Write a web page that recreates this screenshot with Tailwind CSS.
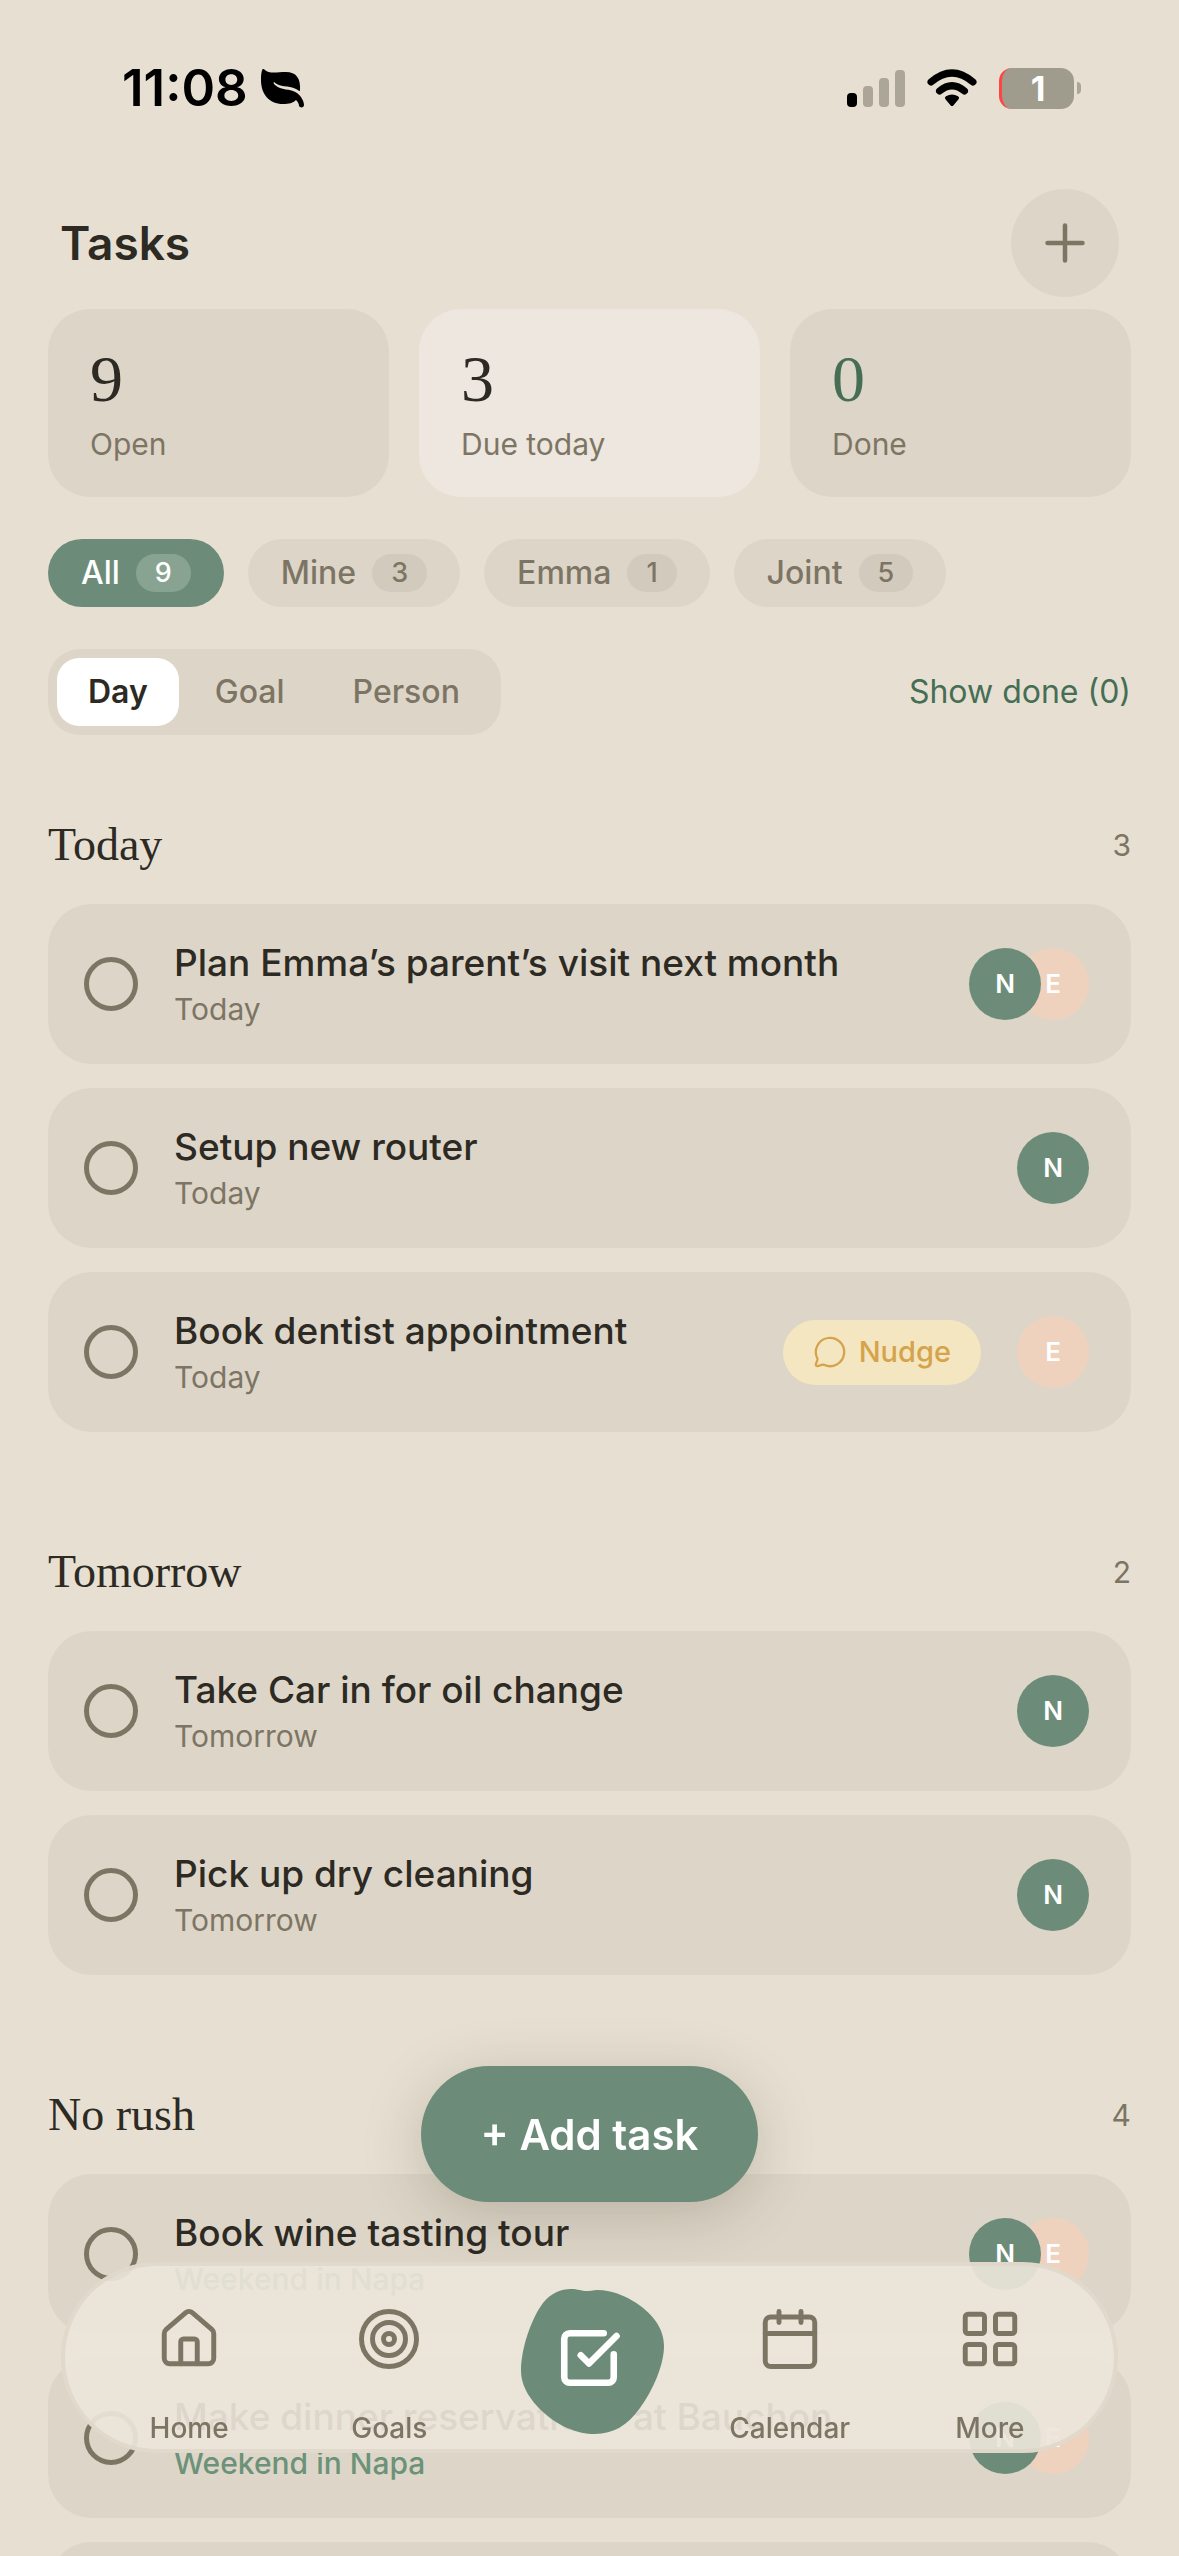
<!DOCTYPE html>
<html lang="en">
<head>
    <meta charset="utf-8">
    <meta name="viewport" content="width=device-width, initial-scale=1">
    <title>Tasks</title>
    <script src="https://cdn.jsdelivr.net/npm/@tailwindcss/browser@4"></script>
</head>

<body class="h-screen overflow-hidden bg-[#e7e0d2] font-['Inter','Noto_Sans',sans-serif] text-[#2d2a24]">

    <!-- status bar -->
    <div class="flex items-center justify-between pt-[56px] pl-[122px] pr-[98px] h-[120px] text-black">
        <div class="flex items-center gap-3">
            <span class="text-[51px] leading-[60px] font-semibold">11:08</span>
            <svg class="w-[46px] h-[40px]" viewBox="0 0 46 40" fill="none">
                <path fill="#000" d="M3 1C2 1 1 5 1 12c0 14 8 24 22 24 6 0 10-1 13-4 2 2 3 4 3 6 1 2 5 2 5-1 0-4-3-9-7-12-7-5-16-2-22-8-1-1-2-2-1-3 6 6 14 3 22 7 2 1 3 2 4 2C41 10 36 4 26 4 17 4 9 6 5 2 4 1 4 1 3 1z"/>
            </svg>
        </div>
        <div class="flex items-center gap-[22px]">
            <svg class="w-[58px] h-[40px]" viewBox="0 0 58 40" fill="#aca698">
                <rect x="0" y="25" width="10" height="14" rx="4" fill="#000"/>
                <rect x="16" y="18" width="10" height="21" rx="4"/>
                <rect x="32" y="10" width="10" height="29" rx="4"/>
                <rect x="48" y="2" width="10" height="37" rx="4"/>
            </svg>
            <svg class="w-[50px] h-[40px]" viewBox="0 0 50 40" fill="none" stroke="#000" stroke-width="7" stroke-linecap="round">
                <path d="M4 14Q25-4 46 14M12.500 23Q25 12.500 37.500 23"/>
                <path d="M20 30Q25 27 30 30L25 36z" fill="#000" stroke-width="4" stroke-linejoin="round"/>
            </svg>
            <div class="flex items-center gap-[3px]">
                <div class="w-[75px] h-[41px] rounded-[13px] overflow-hidden bg-[#9f9c8e] border-l-[3px] border-[#ff4544] text-white text-[34px] leading-[41px] font-bold text-center">1</div>
                <div class="w-1 h-3 rounded-r-full bg-[#aca698]"></div>
            </div>
        </div>
    </div>

    <main class="px-12">
        <header class="flex items-center justify-between px-3 mt-[69px]">
            <h1 class="text-[46px] leading-[60px] font-semibold">Tasks</h1>
            <button type="button" aria-label="New task" class="flex items-center justify-center size-[108px] rounded-full bg-[#ddd6c8]">
                <svg class="size-[60px]" viewBox="0 0 24 24" fill="none" stroke="#7d7564" stroke-width="1.8" stroke-linecap="round">
                    <path d="M5 12h14M12 5v14"/>
                </svg>
            </button>
        </header>

        <!-- counters -->
        <div class="grid grid-cols-3 gap-[30px] mt-3">
            <div class="h-[188px] rounded-[42px] bg-[#ddd6c8] px-[42px] pt-[34px]">
                <div class="font-['Liberation_Serif',serif] text-[66px] leading-[72px]">9</div>
                <div class="mt-2 text-[30px] leading-[42px] text-[#7d7564]">Open</div>
            </div>
            <div class="h-[188px] rounded-[42px] bg-[#ede7df] px-[42px] pt-[34px]">
                <div class="font-['Liberation_Serif',serif] text-[66px] leading-[72px]">3</div>
                <div class="mt-2 text-[30px] leading-[42px] text-[#7d7564]">Due today</div>
            </div>
            <div class="h-[188px] rounded-[42px] bg-[#ddd6c8] px-[42px] pt-[34px]">
                <div class="font-['Liberation_Serif',serif] text-[66px] leading-[72px] text-[#466e55]">0</div>
                <div class="mt-2 text-[30px] leading-[42px] text-[#7d7564]">Done</div>
            </div>
        </div>

        <!-- owner filter -->
        <div class="flex gap-6 mt-[42px] text-[32px] font-medium text-[#7d7564]">
            <button type="button" class="flex items-center gap-4 h-[68px] px-[33px] rounded-full bg-[#6c8c79] text-white">
                All <span class="px-[19px] rounded-full bg-white/20 text-[27px] leading-[38px]">9</span>
            </button>
            <button type="button" class="flex items-center gap-4 h-[68px] px-[33px] rounded-full bg-[#ddd6c8]">
                Mine <span class="px-[19px] rounded-full bg-[#d2cabc] text-[27px] leading-[38px]">3</span>
            </button>
            <button type="button" class="flex items-center gap-4 h-[68px] px-[33px] rounded-full bg-[#ddd6c8]">
                Emma <span class="px-[19px] rounded-full bg-[#d2cabc] text-[27px] leading-[38px]">1</span>
            </button>
            <button type="button" class="flex items-center gap-4 h-[68px] px-[33px] rounded-full bg-[#ddd6c8]">
                Joint <span class="px-[19px] rounded-full bg-[#d2cabc] text-[27px] leading-[38px]">5</span>
            </button>
        </div>

        <!-- grouping -->
        <div class="flex items-center justify-between mt-[42px]">
            <div class="flex gap-1 p-[9px] rounded-[32px] bg-[#ddd6c8] text-[32px] leading-[68px] font-medium text-[#7d7564]">
                <button type="button" class="px-[31px] rounded-[22px] bg-white font-semibold text-[#2d2a24]">Day</button>
                <button type="button" class="px-[32px]">Goal</button>
                <button type="button" class="px-[32px]">Person</button>
            </div>
            <button type="button" class="text-[32px] leading-[42px] text-[#466e55]">Show done (0)</button>
        </div>

        <section class="mt-[80px]">
            <div class="flex items-center justify-between h-[60px]">
                <h2 class="font-['Liberation_Serif',serif] text-[46px] leading-[60px]">Today</h2>
                <span class="text-[30px] text-[#7d7564]">3</span>
            </div>
            <ul class="flex flex-col gap-6 mt-[29px]">
                <li class="flex items-center gap-9 h-[160px] pl-9 pr-[42px] rounded-[44px] bg-[#ddd6c8]">
                    <input id="t1" type="checkbox" class="appearance-none shrink-0 size-[54px] rounded-full border-[5px] border-[#7d7564]">
                    <div class="flex-1 pt-0.5">
                        <label for="t1" class="block text-[37px] leading-[48px] font-medium">Plan Emma’s parent’s visit next month</label>
                        <p class="text-[30px] leading-[44px] text-[#7d7564]">Today</p>
                    </div>
                    <div class="flex text-[26px] leading-[72px] font-semibold text-white text-center">
                        <span class="relative z-10 size-[72px] rounded-full bg-[#6c8c79]">N</span>
                        <span class="size-[72px] -ml-6 rounded-full bg-[#eed2be]">E</span>
                    </div>
                </li>
                <li class="flex items-center gap-9 h-[160px] pl-9 pr-[42px] rounded-[44px] bg-[#ddd6c8]">
                    <input id="t2" type="checkbox" class="appearance-none shrink-0 size-[54px] rounded-full border-[5px] border-[#7d7564]">
                    <div class="flex-1 pt-0.5">
                        <label for="t2" class="block text-[37px] leading-[48px] font-medium">Setup new router</label>
                        <p class="text-[30px] leading-[44px] text-[#7d7564]">Today</p>
                    </div>
                    <span class="size-[72px] rounded-full bg-[#6c8c79] text-[26px] leading-[72px] font-semibold text-white text-center">N</span>
                </li>
                <li class="flex items-center gap-9 h-[160px] pl-9 pr-[42px] rounded-[44px] bg-[#ddd6c8]">
                    <input id="t3" type="checkbox" class="appearance-none shrink-0 size-[54px] rounded-full border-[5px] border-[#7d7564]">
                    <div class="flex-1 pt-0.5">
                        <label for="t3" class="block text-[37px] leading-[48px] font-medium">Book dentist appointment</label>
                        <p class="text-[30px] leading-[44px] text-[#7d7564]">Today</p>
                    </div>
                    <button type="button" class="flex items-center gap-3 h-[65px] px-[30px] rounded-full bg-[#f4e6c0] text-[29px] font-medium text-[#d4a34c]">
                        <svg class="size-[34px]" viewBox="0 0 24 24" fill="none" stroke="currentColor" stroke-width="1.6" stroke-linecap="round" stroke-linejoin="round">
                            <path d="M2.992 16.342a2 2 0 0 1 .094 1.167l-1.065 3.290a1 1 0 0 0 1.236 1.168l3.413-.998a2 2 0 0 1 1.099.092 10 10 0 1 0-4.777-4.719"/>
                        </svg>
                        Nudge
                    </button>
                    <span class="size-[72px] rounded-full bg-[#eed2be] text-[26px] leading-[72px] font-semibold text-white text-center">E</span>
                </li>
            </ul>
        </section>

        <section class="mt-[110px]">
            <div class="flex items-center justify-between h-[60px]">
                <h2 class="font-['Liberation_Serif',serif] text-[46px] leading-[60px]">Tomorrow</h2>
                <span class="text-[30px] text-[#7d7564]">2</span>
            </div>
            <ul class="flex flex-col gap-6 mt-[29px]">
                <li class="flex items-center gap-9 h-[160px] pl-9 pr-[42px] rounded-[44px] bg-[#ddd6c8]">
                    <input id="t4" type="checkbox" class="appearance-none shrink-0 size-[54px] rounded-full border-[5px] border-[#7d7564]">
                    <div class="flex-1 pt-0.5">
                        <label for="t4" class="block text-[37px] leading-[48px] font-medium">Take Car in for oil change</label>
                        <p class="text-[30px] leading-[44px] text-[#7d7564]">Tomorrow</p>
                    </div>
                    <span class="size-[72px] rounded-full bg-[#6c8c79] text-[26px] leading-[72px] font-semibold text-white text-center">N</span>
                </li>
                <li class="flex items-center gap-9 h-[160px] pl-9 pr-[42px] rounded-[44px] bg-[#ddd6c8]">
                    <input id="t5" type="checkbox" class="appearance-none shrink-0 size-[54px] rounded-full border-[5px] border-[#7d7564]">
                    <div class="flex-1 pt-0.5">
                        <label for="t5" class="block text-[37px] leading-[48px] font-medium">Pick up dry cleaning</label>
                        <p class="text-[30px] leading-[44px] text-[#7d7564]">Tomorrow</p>
                    </div>
                    <span class="size-[72px] rounded-full bg-[#6c8c79] text-[26px] leading-[72px] font-semibold text-white text-center">N</span>
                </li>
            </ul>
        </section>

        <section class="mt-[110px]">
            <div class="flex items-center justify-between h-[60px]">
                <h2 class="font-['Liberation_Serif',serif] text-[46px] leading-[60px]">No rush</h2>
                <span class="text-[30px] text-[#7d7564]">4</span>
            </div>
            <ul class="flex flex-col gap-6 mt-[29px]">
                <li class="flex items-center gap-9 h-[160px] pl-9 pr-[42px] rounded-[44px] bg-[#ddd6c8]">
                    <input id="t6" type="checkbox" class="appearance-none shrink-0 size-[54px] rounded-full border-[5px] border-[#7d7564]">
                    <div class="flex-1 pt-0.5">
                        <label for="t6" class="block text-[37px] leading-[48px] font-medium">Book wine tasting tour</label>
                        <p class="text-[30px] leading-[44px] font-medium text-[#6c9279]">Weekend in Napa</p>
                    </div>
                    <div class="flex text-[26px] leading-[72px] font-semibold text-white text-center">
                        <span class="relative z-10 size-[72px] rounded-full bg-[#6c8c79]">N</span>
                        <span class="size-[72px] -ml-6 rounded-full bg-[#eed2be]">E</span>
                    </div>
                </li>
                <li class="flex items-center gap-9 h-[160px] pl-9 pr-[42px] rounded-[44px] bg-[#ddd6c8]">
                    <input id="t7" type="checkbox" class="appearance-none shrink-0 size-[54px] rounded-full border-[5px] border-[#7d7564]">
                    <div class="flex-1 pt-0.5">
                        <label for="t7" class="block text-[37px] leading-[48px] font-medium">Make dinner reservations at Bauchon</label>
                        <p class="text-[30px] leading-[44px] font-medium text-[#6c9279]">Weekend in Napa</p>
                    </div>
                    <div class="flex text-[26px] leading-[72px] font-semibold text-white text-center">
                        <span class="relative z-10 size-[72px] rounded-full bg-[#6c8c79]">N</span>
                        <span class="size-[72px] -ml-6 rounded-full bg-[#eed2be]">E</span>
                    </div>
                </li>
                <li class="h-[160px] rounded-[44px] bg-[#ddd6c8]"></li>
            </ul>
        </section>
    </main>

    <!-- floating button -->
    <div class="fixed z-20 inset-x-0 bottom-[354px] flex justify-center">
        <button type="button" class="h-[136px] px-[60px] rounded-full bg-[#6c8c79] text-[42px] font-semibold text-white shadow-[0_12px_60px_rgba(60,50,30,0.22)]">+ Add task</button>
    </div>

    <!-- tab bar -->
    <nav class="fixed z-30 inset-x-[61px] bottom-[103px] flex h-[191px] px-6 rounded-full border-4 border-[#ddd6c8]/80 bg-[#ebe5da]/92 text-[28px] leading-[32px] font-medium text-[#7d7564]">
        <a href="#" class="flex-1 flex flex-col items-center justify-between pt-[40px] pb-[5px]">
            <svg class="size-[66px]" viewBox="0 0 24 24" fill="none" stroke="currentColor" stroke-width="1.8" stroke-linecap="round" stroke-linejoin="round">
                <path d="M15 21v-8a1 1 0 0 0-1-1h-4a1 1 0 0 0-1 1v8"/>
                <path d="M3 10a2 2 0 0 1 .709-1.528l7-5.999a2 2 0 0 1 2.582 0l7 5.999A2 2 0 0 1 21 10v9a2 2 0 0 1-2 2H5a2 2 0 0 1-2-2z"/>
            </svg>
            Home
        </a>
        <a href="#" class="flex-1 flex flex-col items-center justify-between pt-[40px] pb-[5px]">
            <svg class="size-[66px]" viewBox="0 0 24 24" fill="none" stroke="currentColor" stroke-width="1.8">
                <circle cx="12" cy="12" r="10"/>
                <circle cx="12" cy="12" r="6"/>
                <circle cx="12" cy="12" r="2"/>
            </svg>
            Goals
        </a>
        <a href="#" aria-label="Tasks" class="flex-1 flex justify-center pt-[23px]">
            <svg class="w-[150px] h-[146px]" viewBox="-6 0 150 146" fill="none">
                <path fill="#6c8c79" d="M50 0C57 0 60 2 66 2S72 1 77 1C90 1 102 6 112 12C130 23 143 38 143 57C143 76 132 101 119 119C107 136 92 145 74 145C62 145 54 142 46 139C28 131 0 108 0 82C0 60 10 30 22 14C30 4 40 0 50 0z"/>
                <g transform="translate(35 36) scale(2.750)" stroke="#fff" stroke-width="2.400" stroke-linecap="round" stroke-linejoin="round">
                    <path d="M21 10.656V19a2 2 0 0 1-2 2H5a2 2 0 0 1-2-2V5a2 2 0 0 1 2-2h12.344"/>
                    <path d="m9 11 3 3L22 4"/>
                </g>
            </svg>
        </a>
        <a href="#" class="flex-1 flex flex-col items-center justify-between pt-[40px] pb-[5px]">
            <svg class="size-[66px]" viewBox="0 0 24 24" fill="none" stroke="currentColor" stroke-width="1.8" stroke-linecap="round" stroke-linejoin="round">
                <path d="M8 2v4M16 2v4M3 10h18"/>
                <rect x="3" y="4" width="18" height="18" rx="2"/>
            </svg>
            Calendar
        </a>
        <a href="#" class="flex-1 flex flex-col items-center justify-between pt-[40px] pb-[5px]">
            <svg class="size-[66px]" viewBox="0 0 24 24" fill="none" stroke="currentColor" stroke-width="1.8">
                <rect x="3" y="3" width="7" height="7" rx="1"/>
                <rect x="14" y="3" width="7" height="7" rx="1"/>
                <rect x="14" y="14" width="7" height="7" rx="1"/>
                <rect x="3" y="14" width="7" height="7" rx="1"/>
            </svg>
            More
        </a>
    </nav>

</body>
</html>
